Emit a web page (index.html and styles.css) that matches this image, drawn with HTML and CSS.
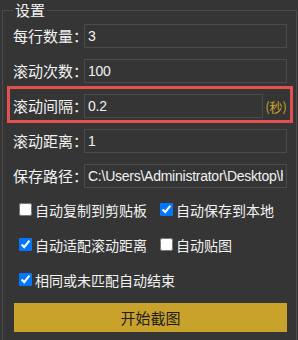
FILE: index.html
```html
<!DOCTYPE html>
<html lang="zh-CN">
<head>
    <meta charset="UTF-8">
    <meta name="viewport" content="width=device-width, initial-scale=1.0">
    <title>设置</title>
    <link rel="stylesheet" href="styles.css">
</head>
<body>

<fieldset class="settings">
    <legend>设置</legend>

    <div class="field-row">
        <label class="field-label">每行数量：</label>
        <input class="field-input" type="text" value="3">
    </div>

    <div class="field-row">
        <label class="field-label">滚动次数：</label>
        <input class="field-input" type="text" value="100">
    </div>

    <!-- highlighted row -->
    <div class="field-row marked">
        <label class="field-label">滚动间隔：</label>
        <input class="field-input" type="text" value="0.2">
        <span class="unit">(秒)</span>
    </div>

    <div class="field-row">
        <label class="field-label">滚动距离：</label>
        <input class="field-input" type="text" value="1">
    </div>

    <div class="field-row">
        <label class="field-label">保存路径：</label>
        <input class="field-input" type="text" value="C:\Users\Administrator\Desktop\h">
    </div>

    <div class="check-grid">
        <label class="check"><input type="checkbox">自动复制到剪贴板</label>
        <label class="check"><input type="checkbox" checked>自动保存到本地</label>
        <label class="check"><input type="checkbox" checked>自动适配滚动距离</label>
        <label class="check"><input type="checkbox">自动贴图</label>
        <label class="check wide"><input type="checkbox" checked>相同或未匹配自动结束</label>
    </div>

    <button class="start-button">开始截图</button>
</fieldset>

</body>
</html>
```

FILE: styles.css
```css
body {
    font-family: "Noto Sans CJK SC", "Liberation Sans", sans-serif;
    font-size: 15px;
    background-color: #353535;
    color: #f2f2f2;
    margin: 0;
    padding: 0;
    overflow: hidden;
}
.settings {
    margin: 0 1px 0 2px;
    padding: 4px 9px 20px 10px;
    border: 1px solid #4b4b4b;
    min-width: 0;
}
.settings legend {
    padding: 0 2px;
    line-height: 20px;
    height: 20px;
}
.field-row {
    display: flex;
    align-items: center;
    height: 24px;
    margin-bottom: 11px;
    position: relative;
}
.field-label {
    width: 71px;
    flex-shrink: 0;
    white-space: nowrap;
    line-height: 24px;
}
.field-input {
    flex: 1;
    min-width: 0;
    height: 24px;
    box-sizing: border-box;
    margin: 0;
    padding: 0 3px;
    background-color: #353535;
    border: 1px solid #4b4b4b;
    color: #f2f2f2;
    font-family: "Liberation Sans", "Noto Sans CJK SC", sans-serif;
    font-size: 14px;
    letter-spacing: -0.25px;
    outline: none;
}
.unit {
    color: #c9a230;
    font-size: 13px;
    margin-left: 2px;
    white-space: nowrap;
}
/* red annotation box drawn over the row */
.marked::after {
    content: "";
    position: absolute;
    left: -6px;
    right: -6px;
    top: -8px;
    bottom: -5px;
    border: 3px solid #e2504f;
    pointer-events: none;
}
.check-grid {
    display: grid;
    grid-template-columns: 141px auto;
    row-gap: 14px;
    padding-left: 2px;
    margin-top: 9px;
}
.check {
    display: flex;
    align-items: center;
    height: 21px;
    font-size: 14px;
    white-space: nowrap;
}
.check input {
    margin: 0 3px 0 4px;
    width: 13px;
    height: 13px;
}
.wide {
    grid-column: 1 / 3;
}
.start-button {
    display: block;
    width: calc(100% - 1px);
    margin: 13px 0 0 1px;
    height: 29px;
    border: none;
    background-color: #c9a22b;
    color: #1e1e1e;
    font-family: "Noto Sans CJK SC", sans-serif;
    font-size: 15px;
    cursor: pointer;
}
```
